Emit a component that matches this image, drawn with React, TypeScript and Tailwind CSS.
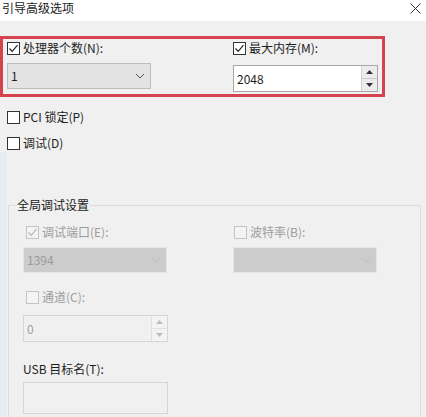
import type { ReactNode } from 'react'

const font = { fontFamily: '"Microsoft YaHei UI", "Noto Sans CJK SC", "Noto Sans", sans-serif' }

function Check({ checked, disabled, label }: { checked?: boolean; disabled?: boolean; label: string }) {
  return (
    <div className="flex items-center gap-[3px] h-[14px]">
      <div
        className={`w-[13px] h-[13px] border flex items-center justify-center ${
          disabled ? 'border-[#c4c4c4] bg-[#f4f4f4]' : 'border-[#333333] bg-white'
        }`}
      >
        {checked && (
          <svg width="11" height="11" viewBox="0 0 11 11">
            <path d="M1.5 5.5 L4.2 8.3 L9.5 2.2" fill="none" stroke={disabled ? '#b5b5b5' : '#222'} strokeWidth="1.2" />
          </svg>
        )}
      </div>
      <span className={`text-[12px] leading-none ${disabled ? 'text-[#9d9d9d]' : 'text-[#1e1e1e]'}`}>{label}</span>
    </div>
  )
}

function Combo({ value, disabled }: { value: string; disabled?: boolean }) {
  return (
    <div
      className={`w-[144px] h-[26px] border flex items-center justify-between pl-[3px] pr-[5px] ${
        disabled ? 'bg-[#cccccc] border-[#e4e4e4]' : 'bg-[#e3e3e3] border-[#bdbdbd]'
      }`}
    >
      <span className={`text-[12px] ${disabled ? 'text-[#9a9a9a]' : 'text-[#1e1e1e]'}`}>{value}</span>
      <svg width="10" height="6" viewBox="0 0 10 6">
        <path d="M1 1 L5 5 L9 1" fill="none" stroke={disabled ? '#bdbdbd' : '#555'} strokeWidth="1" />
      </svg>
    </div>
  )
}

function Spin({ value, disabled }: { value: string; disabled?: boolean }) {
  const c = disabled ? '#bcbcbc' : '#333'
  return (
    <div
      className={`w-[145px] h-[27px] border flex ${
        disabled ? 'bg-[#f0f0f0] border-[#d6d6d6]' : 'bg-white border-[#a8a8a8]'
      }`}
    >
      <div className="flex-1 flex items-center pl-[3px]">
        <span className={`text-[12px] ${disabled ? 'text-[#a0a0a0]' : 'text-[#1e1e1e]'}`}>{value}</span>
      </div>
      <div className={`w-[16px] flex flex-col border-l ${disabled ? 'border-[#e0e0e0]' : 'border-[#d0d0d0]'}`}>
        <div className={`flex-1 flex items-center justify-center border-b ${disabled ? 'border-[#e0e0e0] bg-[#f3f3f3]' : 'border-[#c9c9c9] bg-[#ececec]'}`}>
          <svg width="7" height="4" viewBox="0 0 7 4"><path d="M0 4 L3.5 0 L7 4 Z" fill={c} /></svg>
        </div>
        <div className={`flex-1 flex items-center justify-center ${disabled ? 'bg-[#f3f3f3]' : 'bg-[#ececec]'}`}>
          <svg width="7" height="4" viewBox="0 0 7 4"><path d="M0 0 L3.5 4 L7 0 Z" fill={c} /></svg>
        </div>
      </div>
    </div>
  )
}

function Field({ children }: { children: ReactNode }) {
  return <div className="flex flex-col">{children}</div>
}

export default function App() {
  return (
    <div className="w-[426px] h-[417px] bg-[#f0f0f0] overflow-hidden flex flex-col" style={font}>
      {/* title bar */}
      <div className="h-[21px] shrink-0 bg-white flex items-start justify-between pl-[2px] pr-[5px]">
        <span className="text-[12px] leading-[14px] text-[#1a1a1a] mt-[1px]">引导高级选项</span>
        <svg width="11" height="11" viewBox="0 0 11 11" className="mt-[3px]">
          <path d="M0.5 0.5 L10.5 10.5 M10.5 0.5 L0.5 10.5" stroke="#333" strokeWidth="1" />
        </svg>
      </div>

      {/* top options */}
      <div className="pt-[15px]">
        <div className="w-[385px] h-[61px] border-[3px] border-[#d4434e] flex pl-[4px] pt-[2px]">
          <div className="w-[225px] flex flex-col gap-[8px]">
            <Check checked label="处理器个数(N):" />
            <Combo value="1" />
          </div>
          <div className="flex flex-col gap-[10px] pl-[1px]">
            <Check checked label="最大内存(M):" />
            <Spin value="2048" />
          </div>
        </div>
        <div className="flex flex-col gap-[12px] pl-[7px] pt-[13px]">
          <Check label="PCI 锁定(P)" />
          <Check label="调试(D)" />
        </div>
      </div>

      {/* global debug settings */}
      <div className="flex flex-1 mt-[2px]">
        <div className="w-[7px] bg-[#e4edf1]" />
        <div className="flex-1 pt-[53px] pr-[5px]">
          <div className="relative h-full border-t border-r border-l border-[#dcdcdc] ml-[1px] pl-[14px]">
            <span className="absolute -top-[8px] left-[7px] px-[1px] bg-[#f0f0f0] text-[12px] leading-[14px] text-[#1a1a1a]">
              全局调试设置
            </span>
            <div className="flex pt-[19px]">
              <div className="w-[210px] flex flex-col gap-[8px]">
                <div className="pl-[3px]">
                  <Check checked disabled label="调试端口(E):" />
                </div>
                <Combo value="1394" disabled />
              </div>
              <div className="flex flex-col gap-[8px]">
                <div className="pl-[1px]">
                  <Check disabled label="波特率(B):" />
                </div>
                <Combo value="" disabled />
              </div>
            </div>
            <div className="flex flex-col gap-[11px] pt-[17px]">
              <div className="pl-[3px]">
                <Check disabled label="通道(C):" />
              </div>
              <Spin value="0" disabled />
            </div>
            <Field>
              <span className="text-[12px] leading-[14px] text-[#1e1e1e] pt-[20px]">USB 目标名(T):</span>
              <div className="mt-[6px] w-[145px] h-[32px] border border-[#d6d6d6] bg-[#f0f0f0]" />
            </Field>
          </div>
        </div>
      </div>
    </div>
  )
}
